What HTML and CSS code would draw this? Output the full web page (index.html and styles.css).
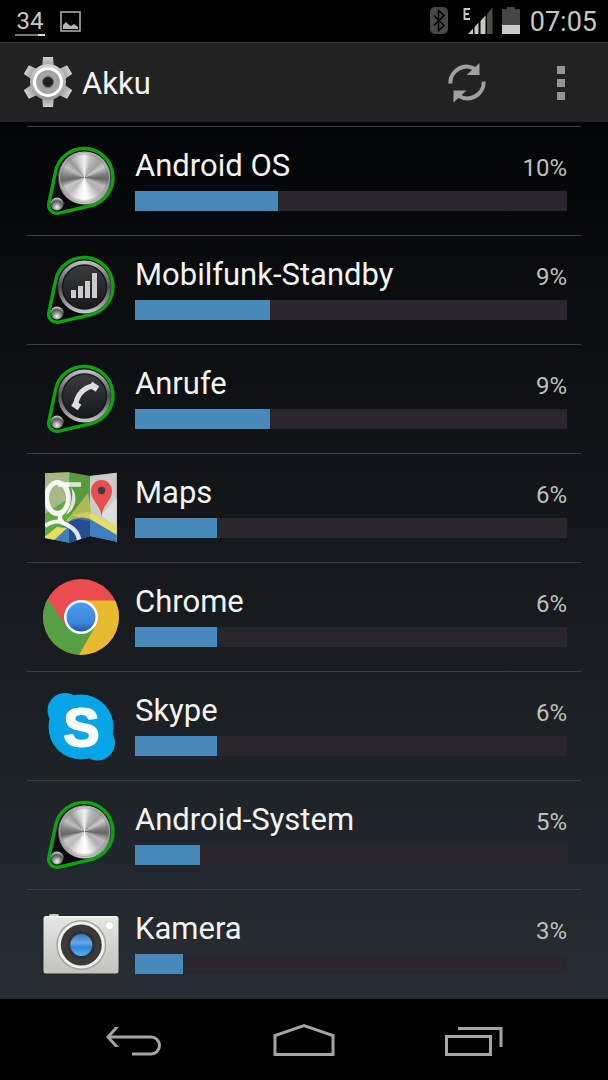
FILE: index.html
```html
<!DOCTYPE html>
<html lang="de">
<head>
    <meta charset="UTF-8">
    <meta name="viewport" content="width=device-width, initial-scale=1.0">
    <title>Akku</title>
    <link rel="stylesheet" href="styles.css">
</head>
<body>
    <!-- shared gradients and the round system icon -->
    <svg class="defs" width="0" height="0" aria-hidden="true">
        <defs>
            <linearGradient id="silver" x1="0" y1="0" x2="0" y2="1">
                <stop offset="0" stop-color="#d0d0cc"/>
                <stop offset="1" stop-color="#979797"/>
            </linearGradient>
            <linearGradient id="ring" x1="0" y1="0" x2="0" y2="1">
                <stop offset="0" stop-color="#c4c4c4"/>
                <stop offset="0.5" stop-color="#4a4a4a"/>
                <stop offset="1" stop-color="#c9c9c9"/>
            </linearGradient>
            <linearGradient id="dark" x1="0" y1="0" x2="0" y2="1">
                <stop offset="0" stop-color="#3a3c3f"/>
                <stop offset="1" stop-color="#17181b"/>
            </linearGradient>
            <radialGradient id="ball" cx="0.5" cy="0.75" r="0.7">
                <stop offset="0" stop-color="#f4f4f4"/>
                <stop offset="0.45" stop-color="#8a8a8a"/>
                <stop offset="0.7" stop-color="#555"/>
                <stop offset="1" stop-color="#ccc"/>
            </radialGradient>
            <linearGradient id="lens" x1="0" y1="0" x2="0" y2="1">
                <stop offset="0" stop-color="#2f78c4"/>
                <stop offset="0.4" stop-color="#6aa6e4"/>
                <stop offset="0.6" stop-color="#2f86dc"/>
                <stop offset="1" stop-color="#55b2f6"/>
            </linearGradient>
            <linearGradient id="camera-body" x1="0" y1="0" x2="0" y2="1">
                <stop offset="0" stop-color="#e6e6e3"/>
                <stop offset="1" stop-color="#c3c3bc"/>
            </linearGradient>
            <linearGradient id="chrome-blue" x1="0" y1="0" x2="0" y2="1">
                <stop offset="0" stop-color="#4a9ff0"/>
                <stop offset="0.7" stop-color="#3c86d8"/>
                <stop offset="1" stop-color="#24579c"/>
            </linearGradient>
            <clipPath id="map-sheet"><path d="M2 4.3L26.3 3.3 47 7 73.7 3.7V72.7L47 67 26.3 73.7 2 69z"/></clipPath>
            <clipPath id="chrome-disc"><circle cx="38" cy="39" r="38"/></clipPath>
        </defs>
        <symbol id="knob" viewBox="0 0 76 76">
            <path d="M12.6 29.5A29 29 0 1 1 47.5 63.7L15.9 71.1A8.3 8.3 0 0 1 5.9 61.3z" fill="#0a0b0c" stroke="#0ba40b" stroke-width="3.500"/>
            <circle cx="41.500" cy="36" r="26.500" fill="url(#ring)"/>
            <circle cx="14" cy="62" r="6.500" fill="url(#ball)"/>
        </symbol>
    </svg>

    <div class="screen">
        <div class="status-bar">
            <span class="battery-level">34</span>
            <svg class="status-picture" width="21" height="21" viewBox="0 0 21 21">
                <rect x="1" y="1" width="19" height="19" fill="none" stroke="#b4b5ae" stroke-width="1.500"/>
                <path d="M3 18v-4l3-3 3 3 2 1 3-2 4 3v2z" fill="#b4b5ae"/>
            </svg>
            <div class="status-right">
                <svg width="18" height="28" viewBox="0 0 18 28">
                    <rect width="18" height="27" rx="5" fill="#474747"/>
                    <path d="M4 8.500l10 10-5.500 5V3.500l5.500 5-10 10" fill="none" stroke="#000" stroke-width="1.500"/>
                </svg>
                <svg class="signal" width="30" height="28" viewBox="0 0 30 28">
                    <path d="M7 2H1.500v10H7M1.500 7H6" fill="none" stroke="#c6c7c0" stroke-width="1.800"/>
                    <path d="M5 27l5-5.500V27zM11.500 20l4-4.300V27h-4zM17.500 14l5-5.500V27h-5z" fill="#c6c7c0"/>
                    <path d="M24 7l5.500-6.500V27H24z" fill="#4b4b49"/>
                </svg>
                <svg class="battery" width="18" height="28" viewBox="0 0 18 28">
                    <path d="M5 0h8v2h5v16H0V2h5z" fill="#464646"/>
                    <path d="M0 18h18v9H0z" fill="#cacbc4"/>
                </svg>
                <span class="clock">07:05</span>
            </div>
        </div>

        <header class="action-bar">
            <svg class="gear" width="48" height="52" viewBox="0 0 48 52">
                <g transform="translate(24 25)">
                    <g fill="url(#silver)">
                        <path id="tooth" d="M-5-25H5L6-14H-6z"/>
                        <use href="#tooth" transform="rotate(60)"/>
                        <use href="#tooth" transform="rotate(120)"/>
                        <use href="#tooth" transform="rotate(180)"/>
                        <use href="#tooth" transform="rotate(240)"/>
                        <use href="#tooth" transform="rotate(300)"/>
                        <circle r="18"/>
                    </g>
                    <circle r="12" fill="#a4a4a4"/>
                    <circle r="13.500" fill="none" stroke="#fff" stroke-width="3"/>
                    <circle r="5.500" fill="#222" stroke="#777" stroke-width="0.800"/>
                </g>
            </svg>
            <h1>Akku</h1>
            <button type="button" class="refresh" aria-label="Aktualisieren">
                <svg width="38" height="42" viewBox="0 0 38 42">
                    <g fill="none" stroke="#a0a0a0" stroke-width="4">
                        <path d="M2.200 21.500C2 8 18-1 28.500 8.500"/>
                        <path d="M35.800 19.500C36 33 20 42 9.500 32.500"/>
                    </g>
                    <path d="M31.500 1v12H18.500zM5.500 40.500V28.500H18.500z" fill="#a0a0a0"/>
                </svg>
            </button>
            <button type="button" class="more" aria-label="Weitere Optionen">
                <svg width="8" height="34" viewBox="0 0 8 34">
                    <path d="M0 0h8v8H0zM0 13h8v8H0zM0 26h8v8H0z" fill="#949494"/>
                </svg>
            </button>
        </header>

        <main>
            <ul class="usage-list">
                <li class="usage">
                    <svg class="app-icon" viewBox="0 0 76 76">
                        <use href="#knob"/>
                        <foreignObject x="16" y="10" width="51" height="51"><div class="brushed"></div></foreignObject>
                    </svg>
                    <div class="details">
                        <div class="label"><span class="name">Android OS</span><span class="percent">10%</span></div>
                        <div class="bar"><div class="fill" style="width: 33.1%"></div></div>
                    </div>
                </li>
                <li class="usage">
                    <svg class="app-icon" viewBox="0 0 76 76">
                        <use href="#knob"/>
                        <circle cx="41.500" cy="36" r="22" fill="url(#dark)" stroke="#17181a" stroke-width="1.500"/>
                        <path d="M28 39h5v8h-5zM35 35h5v12h-5zM42 30h5v17h-5zM49 22h5v25h-5z" fill="#cbcbc9"/>
                    </svg>
                    <div class="details">
                        <div class="label"><span class="name">Mobilfunk-Standby</span><span class="percent">9%</span></div>
                        <div class="bar"><div class="fill" style="width: 31.2%"></div></div>
                    </div>
                </li>
                <li class="usage">
                    <svg class="app-icon" viewBox="0 0 76 76">
                        <use href="#knob"/>
                        <circle cx="41.500" cy="36" r="22" fill="url(#dark)" stroke="#17181a" stroke-width="1.500"/>
                        <g fill="none" stroke="#dededb">
                            <path d="M51 25.500Q35 29 32.500 45" stroke-width="5"/>
                            <path d="M47.500 24.500l7 4.500M30 43l6.500 4.500" stroke-width="6.500"/>
                        </g>
                    </svg>
                    <div class="details">
                        <div class="label"><span class="name">Anrufe</span><span class="percent">9%</span></div>
                        <div class="bar"><div class="fill" style="width: 31.2%"></div></div>
                    </div>
                </li>
                <li class="usage">
                    <svg class="app-icon" viewBox="0 0 76 76">
                        <g clip-path="url(#map-sheet)">
                            <path d="M0 0h76v76H0z" fill="#60a846"/>
                            <path d="M2 3h24.300v26L2 45z" fill="#a5b885"/>
                            <path d="M47 0h29v76L47 44z" fill="#cbcbcb"/>
                            <path d="M23 52L45 24l4 22-10 7z" fill="#bccb5c"/>
                            <path d="M58 46L75 28v32z" fill="#ddd"/>
                            <path d="M2 69L30 50 47 47 76 67v9H2z" fill="#3f7fc0"/>
                            <path d="M26 53l9-3 12 2v16l-21 7z" fill="#29529e"/>
                            <path d="M0 69l14-11 10 1L6 76zM28 46l17-3 29 14v9L47 50z" fill="#e9dd5c"/>
                            <g fill="none" stroke="#f6f7f2">
                                <ellipse cx="14.500" cy="29" rx="11" ry="15.500" stroke-width="5"/>
                                <path d="M15 15.500H38M22 41Q13 48 20 54 38 61 36 76" stroke-width="4.500"/>
                                <path d="M2 57Q10 51 20 53" stroke-width="4"/>
                            </g>
                            <path d="M28 18Q37 29 28 42L23 46Q32 30 28 18z" fill="#f6f7f2"/>
                            <path d="M26.300 0L47 7v69H26.300z" fill="#000" fill-opacity="0.080"/>
                        </g>
                        <path d="M58.500 48C58 36 48 32 48 22a10.500 11 0 0 1 21 0C69 32 59 36 58.500 48z" fill="#e84d50"/>
                        <circle cx="58.500" cy="21.500" r="3.700" fill="#423c3c"/>
                    </svg>
                    <div class="details">
                        <div class="label"><span class="name">Maps</span><span class="percent">6%</span></div>
                        <div class="bar"><div class="fill" style="width: 19%"></div></div>
                    </div>
                </li>
                <li class="usage">
                    <svg class="app-icon" viewBox="0 0 76 76">
                        <g clip-path="url(#chrome-disc)">
                            <path d="M0 0h76v80H0z" fill="#ea4c50"/>
                            <path d="M38 22.500H78V80H34L52 48z" fill="#e8ba2f"/>
                            <path d="M0 12l5 9 18 27 15 8 14-7-18 31H0z" fill="#57a043"/>
                            <path d="M4 20A38 38 0 0 1 66 13" fill="none" stroke="#f3a2a3" stroke-width="0.600"/>
                        </g>
                        <circle cx="38" cy="39" r="17" fill="#fff"/>
                        <circle cx="38" cy="39" r="14.500" fill="url(#chrome-blue)"/>
                    </svg>
                    <div class="details">
                        <div class="label"><span class="name">Chrome</span><span class="percent">6%</span></div>
                        <div class="bar"><div class="fill" style="width: 19%"></div></div>
                    </div>
                </li>
                <li class="usage">
                    <svg class="app-icon" viewBox="0 0 76 76">
                        <g fill="#06a5e8">
                            <circle cx="38" cy="40" r="32.500"/>
                            <circle cx="22" cy="23.500" r="17.500"/>
                            <circle cx="54.500" cy="56" r="17.500"/>
                        </g>
                        <text class="skype-letter" x="38.500" y="59">S</text>
                    </svg>
                    <div class="details">
                        <div class="label"><span class="name">Skype</span><span class="percent">6%</span></div>
                        <div class="bar"><div class="fill" style="width: 19%"></div></div>
                    </div>
                </li>
                <li class="usage">
                    <svg class="app-icon" viewBox="0 0 76 76">
                        <use href="#knob"/>
                        <foreignObject x="16" y="10" width="51" height="51"><div class="brushed"></div></foreignObject>
                    </svg>
                    <div class="details">
                        <div class="label"><span class="name">Android-System</span><span class="percent">5%</span></div>
                        <div class="bar"><div class="fill" style="width: 15.1%"></div></div>
                    </div>
                </li>
                <li class="usage">
                    <svg class="app-icon" viewBox="0 0 76 76">
                        <rect x="6" y="9" width="10" height="5" rx="1.500" fill="#c9c9c4"/>
                        <rect x="0.500" y="11" width="75" height="57.500" rx="2.500" fill="url(#camera-body)"/>
                        <path d="M2 12h72" stroke="#fff" stroke-width="1"/>
                        <circle cx="38.300" cy="40" r="25" fill="#a4a49f"/>
                        <circle cx="38.300" cy="40" r="23.500" fill="#efefed"/>
                        <circle cx="38.300" cy="40" r="20.500" fill="#3a3a3a"/>
                        <circle cx="38.300" cy="40" r="14" fill="#303030"/>
                        <circle cx="38.300" cy="40" r="11" fill="url(#lens)"/>
                        <circle cx="66.500" cy="20.500" r="4" fill="#fff" stroke="#c4c4c4" stroke-width="0.600"/>
                    </svg>
                    <div class="details">
                        <div class="label"><span class="name">Kamera</span><span class="percent">3%</span></div>
                        <div class="bar"><div class="fill" style="width: 11.1%"></div></div>
                    </div>
                </li>
            </ul>
        </main>

        <nav class="nav-bar">
            <button type="button" aria-label="Zurück">
                <svg width="58" height="34" viewBox="0 0 58 34">
                    <path d="M3 14h43a8.500 8.500 0 0 1 0 17H27" fill="none" stroke="#a4a4a4" stroke-width="3"/>
                    <path d="M1 14L10 4h4L5 14l9 10h-4z" fill="#a4a4a4"/>
                </svg>
            </button>
            <button type="button" aria-label="Startseite">
                <svg width="62" height="34" viewBox="0 0 62 34">
                    <path d="M2 31.500V12.500L31 2.500l29 10v19z" fill="none" stroke="#a4a4a4" stroke-width="3"/>
                </svg>
            </button>
            <button type="button" aria-label="Letzte Apps">
                <svg width="58" height="34" viewBox="0 0 58 34">
                    <path d="M1.500 13.500h44v18h-44zM13 5.500h43V24" fill="none" stroke="#a4a4a4" stroke-width="3"/>
                </svg>
            </button>
        </nav>
    </div>
</body>
</html>
```

FILE: styles.css
```css
body {
    margin: 0;
    background-color: #000;
    color: #f3f3f3;
    font-family: Roboto, sans-serif;
}

button {
    display: flex;
    align-items: center;
    justify-content: center;
    padding: 0;
    border: none;
    background: none;
    cursor: pointer;
}

svg {
    display: block;
    flex-shrink: 0;
}

.defs {
    position: absolute;
}

.screen {
    display: flex;
    flex-direction: column;
    min-height: 100vh;
}

/* status bar */
.status-bar {
    display: flex;
    align-items: center;
    height: 42px;
    padding: 0 11px 0 15px;
    box-sizing: border-box;
    color: #c6c7c0;
}

.battery-level {
    width: 30px;
    height: 26px;
    padding-top: 2px;
    border-bottom: 2px solid #777;
    border-image: linear-gradient(to right, #777 75%, #deded8 75%) 1;
    font-size: 24px;
    line-height: 26px;
    text-align: center;
}

.status-picture {
    margin-left: 15px;
}

.status-right {
    display: flex;
    align-items: center;
    margin-left: auto;
}

.signal {
    margin-left: 15px;
}

.battery {
    margin: 0 10px 0 9px;
}

.clock {
    padding-top: 2px;
    font-size: 27px;
    line-height: 32px;
}

/* title bar */
.action-bar {
    display: flex;
    align-items: center;
    height: 80px;
    padding-left: 24px;
    box-sizing: border-box;
    border-top: 1px solid #3a3a3a;
    background-color: #222;
}

h1 {
    margin: 0 auto 0 10px;
    padding-top: 2px;
    font-size: 31px;
    font-weight: 400;
    line-height: 36px;
}

.refresh,
.more {
    width: 94px;
    height: 79px;
}

/* app list */
main {
    flex: 1;
    padding: 4px 27px 0;
    background: linear-gradient(#030405, #15191d 50%, #282d34);
}

.usage-list {
    margin: 0;
    padding: 0;
    list-style: none;
}

.usage {
    display: flex;
    gap: 16px;
    height: 109px;
    padding: 15px 14px 0 16px;
    box-sizing: border-box;
    border-top: 1px solid #3c3f42;
}

.app-icon {
    width: 76px;
    height: 76px;
    overflow: visible;
}

.details {
    flex: 1;
}

.label {
    display: flex;
    align-items: baseline;
    justify-content: space-between;
    height: 49px;
    line-height: 48px;
}

.name {
    font-size: 31px;
}

.percent {
    color: #bfc0bb;
    font-size: 24px;
}

.bar {
    height: 20px;
    background-color: #29262d;
}

.fill {
    height: 100%;
    background-color: #468abb;
}

.brushed {
    width: 51px;
    height: 51px;
    box-sizing: border-box;
    border: 1px solid #aaa;
    border-radius: 50%;
    background: conic-gradient(#f0f0f0, #b8b8b8 20deg, #a0a0a0 45deg, #ccc 60deg, #808080 80deg, #666 95deg, #bbb 115deg, #b0b0b0 135deg, #eee 165deg, #fff 180deg, #eee 200deg, #bbb 225deg, #c8c8c8 245deg, #666 262deg, #888 280deg, #c0c0c0 300deg, #999 320deg, #ccc 340deg, #f0f0f0);
    box-shadow: inset 0 0 0 2px rgba(120, 120, 120, 0.3);
}

.skype-letter {
    fill: #fff;
    stroke: #fff;
    stroke-width: 2px;
    stroke-linejoin: round;
    font-family: "Liberation Sans", sans-serif;
    font-size: 54px;
    font-weight: 700;
    text-anchor: middle;
}

/* navigation keys */
.nav-bar {
    display: flex;
    justify-content: center;
    gap: 56px;
    height: 81px;
}

.nav-bar button {
    width: 114px;
}
```
